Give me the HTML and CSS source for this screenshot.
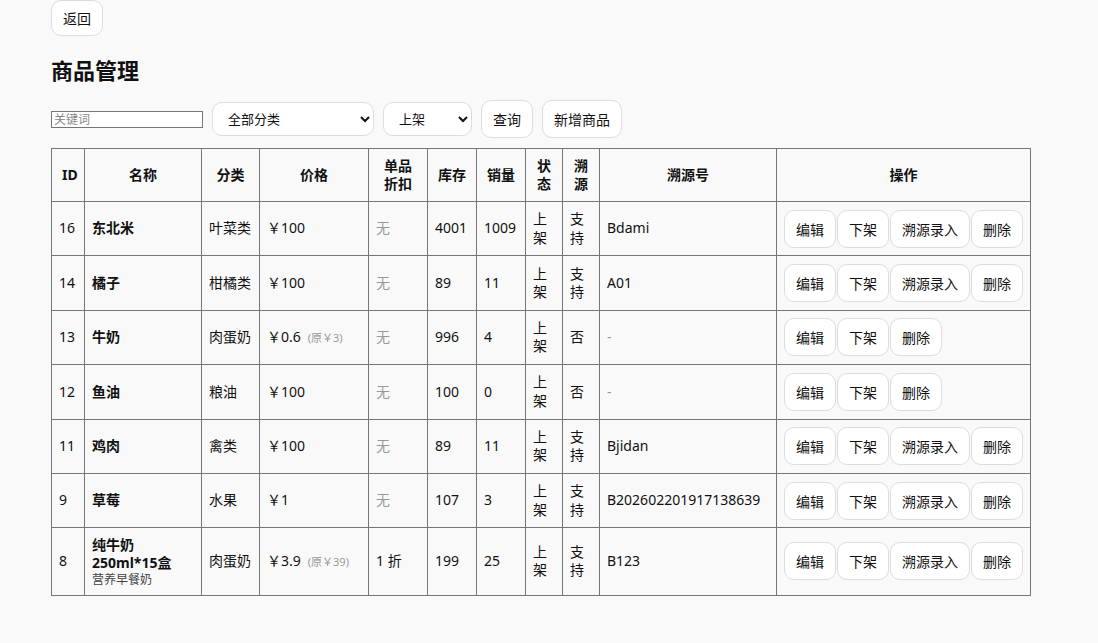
FILE: index.html
```html
<!DOCTYPE html>
<html lang="zh-CN">
<head>
  <meta charset="UTF-8">
  <title>商品管理</title>
  <link rel="stylesheet" href="styles.css">
</head>
<body>
  <div class="page">
    <button class="btn back-btn" onclick="history.back()">返回</button>
    <h2>商品管理</h2>

    <div class="filters">
      <input type="text" class="kw" placeholder="关键词">
      <select class="sel sel-cat">
        <option>全部分类</option>
        <option>叶菜类</option>
        <option>柑橘类</option>
        <option>肉蛋奶</option>
        <option>粮油</option>
        <option>禽类</option>
        <option>水果</option>
      </select>
      <select class="sel sel-status">
        <option>上架</option>
        <option>下架</option>
      </select>
      <button class="btn">查询</button>
      <button class="btn">新增商品</button>
    </div>

    <table class="goods">
      <colgroup>
        <col style="width:33px">
        <col style="width:117px">
        <col style="width:58px">
        <col style="width:109px">
        <col style="width:59px">
        <col style="width:49px">
        <col style="width:49px">
        <col style="width:37px">
        <col style="width:37px">
        <col style="width:177px">
        <col style="width:254px">
      </colgroup>
      <thead>
        <tr>
          <th>ID</th><th>名称</th><th>分类</th><th>价格</th><th>单品折扣</th>
          <th>库存</th><th>销量</th><th>状态</th><th>溯源</th><th>溯源号</th><th>操作</th>
        </tr>
      </thead>
      <tbody>
        <tr>
          <td>16</td><td class="name">东北米</td><td>叶菜类</td><td>￥100</td><td class="muted">无</td>
          <td>4001</td><td>1009</td><td>上架</td><td>支持</td><td>Bdami</td>
          <td class="ops"><button class="btn">编辑</button><button class="btn">下架</button><button class="btn">溯源录入</button><button class="btn">删除</button></td>
        </tr>
        <tr>
          <td>14</td><td class="name">橘子</td><td>柑橘类</td><td>￥100</td><td class="muted">无</td>
          <td>89</td><td>11</td><td>上架</td><td>支持</td><td>A01</td>
          <td class="ops"><button class="btn">编辑</button><button class="btn">下架</button><button class="btn">溯源录入</button><button class="btn">删除</button></td>
        </tr>
        <tr>
          <td>13</td><td class="name">牛奶</td><td>肉蛋奶</td><td>￥0.6<span class="orig">(原￥3)</span></td><td class="muted">无</td>
          <td>996</td><td>4</td><td>上架</td><td>否</td><td class="muted">-</td>
          <td class="ops"><button class="btn">编辑</button><button class="btn">下架</button><button class="btn">删除</button></td>
        </tr>
        <tr>
          <td>12</td><td class="name">鱼油</td><td>粮油</td><td>￥100</td><td class="muted">无</td>
          <td>100</td><td>0</td><td>上架</td><td>否</td><td class="muted">-</td>
          <td class="ops"><button class="btn">编辑</button><button class="btn">下架</button><button class="btn">删除</button></td>
        </tr>
        <tr>
          <td>11</td><td class="name">鸡肉</td><td>禽类</td><td>￥100</td><td class="muted">无</td>
          <td>89</td><td>11</td><td>上架</td><td>支持</td><td>Bjidan</td>
          <td class="ops"><button class="btn">编辑</button><button class="btn">下架</button><button class="btn">溯源录入</button><button class="btn">删除</button></td>
        </tr>
        <tr>
          <td>9</td><td class="name">草莓</td><td>水果</td><td>￥1</td><td class="muted">无</td>
          <td>107</td><td>3</td><td>上架</td><td>支持</td><td>B202602201917138639</td>
          <td class="ops"><button class="btn">编辑</button><button class="btn">下架</button><button class="btn">溯源录入</button><button class="btn">删除</button></td>
        </tr>
        <tr>
          <td>8</td><td class="name">纯牛奶250ml*15盒<div class="sub">营养早餐奶</div></td><td>肉蛋奶</td><td>￥3.9<span class="orig">(原￥39)</span></td><td>1 折</td>
          <td>199</td><td>25</td><td>上架</td><td>支持</td><td>B123</td>
          <td class="ops"><button class="btn">编辑</button><button class="btn">下架</button><button class="btn">溯源录入</button><button class="btn">删除</button></td>
        </tr>
      </tbody>
    </table>
  </div>
</body>
</html>
```

FILE: styles.css
```css
body {
  margin: 0;
  background: #f9f9f9;
  color: #111;
  font-family: "Noto Sans", "Noto Sans CJK SC", sans-serif;
  font-size: 14px;
}
.page { padding: 0 51px 40px; }

.btn {
  height: 38px; padding: 0 11px; margin: 0;
  border: 1px solid #ddd; border-radius: 10px; background: #fff;
  font-family: inherit; font-size: 14px; color: #111; cursor: pointer;
}
.back-btn { display: block; height: 36px; width: 52px; padding: 0; }

h2 { font-size: 22px; line-height: 30px; margin: 19px 0 15px; }

.filters { display: flex; align-items: center; gap: 9px; margin-bottom: 10px; }
.kw {
  width: 152px; height: 17px; box-sizing: border-box; padding: 0 2px;
  border: 1px solid #767676; font-family: inherit; font-size: 12px; background: #fff;
}
.kw::placeholder { color: #888; }
.sel {
  height: 34px; padding: 0 8px 0 11px;
  border: 1px solid #ddd; border-radius: 10px; background: #fff;
  font-family: inherit; font-size: 13px; color: #111;
}
.sel-cat { width: 162px; }
.sel-status { width: 89px; }

.goods { border-collapse: collapse; table-layout: fixed; width: 979px; }
.goods th, .goods td { border: 1px solid #777; padding: 7.7px 7px; line-height: 18.5px; }
.goods th { font-weight: bold; text-align: center; padding: 8px 10px; line-height: 18px; }
.goods td { text-align: left; }
.name { font-weight: bold; line-height: 18px; }
.sub { font-weight: normal; font-size: 12px; line-height: 14px; color: #444; }
.muted { color: #999; }
.orig { font-size: 11px; color: #999; margin-left: 7px; }
.ops { white-space: nowrap; }
.ops .btn { margin-right: 1px; }
```
